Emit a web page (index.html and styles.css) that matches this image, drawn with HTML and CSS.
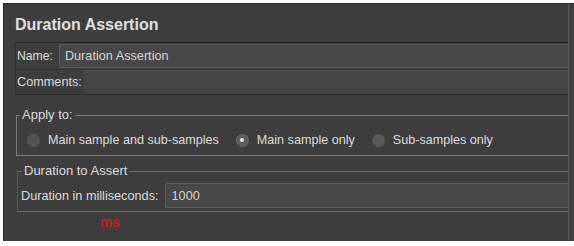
FILE: index.html
```html
<!DOCTYPE html>
<html>
<head>
<meta charset="utf-8">
<link rel="stylesheet" href="styles.css">
</head>
<body>
<div class="frame">
  <div class="panel">
    <div class="title">Duration Assertion</div>
    <div class="namebox">
      <div class="row name-row">
        <span class="lbl">Name:</span>
        <div class="field">Duration Assertion</div>
      </div>
      <div class="row comments-row">
        <span class="lbl">Comments:</span>
        <div class="field field-flat"></div>
      </div>
    </div>
    <fieldset class="group apply">
      <legend>Apply to:</legend>
      <div class="radios">
        <label class="opt"><span class="radio off dim"></span>Main sample and sub-samples</label>
        <label class="opt"><span class="radio on"></span>Main sample only</label>
        <label class="opt"><span class="radio off"></span>Sub-samples only</label>
      </div>
    </fieldset>
    <fieldset class="group duration">
      <legend>Duration to Assert</legend>
      <div class="drow">
        <span class="lbl">Duration in milliseconds:</span>
        <div class="field dfield">1000</div>
      </div>
    </fieldset>
    <div class="ms">ms</div>
  </div>
  <div class="edge"></div>
</div>
</body>
</html>
```

FILE: styles.css
```css
html, body {
  margin: 0;
  padding: 0;
  background: #ffffff;
}
body {
  font-family: "Liberation Sans", Arial, sans-serif;
  font-size: 12.7px;
  color: #d6d6d6;
}
.frame {
  margin: 3px 0 0 3px;
  height: 238px;
  display: flex;
  background: #3d3d3d;
  border-left: 1px solid #262626;
  border-top: 1px solid #2c2c2c;
  box-sizing: border-box;
  overflow: hidden;
}
.panel {
  flex: 1;
  min-width: 0;
  padding: 12px 0 0 11px;
}
.edge {
  width: 5px;
  border-left: 1px solid #5a5a5a;
  background: #3e3e3e;
}
.title {
  font-size: 16px;
  font-weight: bold;
  line-height: 18px;
  color: #e0e0e0;
}
.namebox {
  margin-top: 8px;
  border-top: 1px solid #2a2a2a;
  border-left: 1px solid #2e2e2e;
  border-bottom: 1px solid #2a2a2a;
}
.row {
  display: flex;
  align-items: stretch;
  padding-left: 1px;
}
.name-row {
  height: 26px;
}
.comments-row {
  height: 24px;
  border-top: 1px solid #333;
}
.lbl {
  display: flex;
  align-items: center;
  white-space: nowrap;
  color: #dcdcdc;
}
.name-row .lbl {
  font-size: 12.2px;
}
.field {
  flex: 1;
  margin: 1px 0 1px 6px;
  background: #474747;
  border: 1px solid #5c5c5c;
  border-right: none;
  display: flex;
  align-items: center;
  padding-left: 5px;
  color: #d6d6d6;
}
.field-flat {
  margin: 0 0 0 2px;
  border: none;
  border-top: 1px solid #505050;
  background: #454545;
}
.group {
  margin: 0;
  border: 1px solid #7c7c7c;
  border-right: none;
  min-width: 0;
}
.group legend {
  padding: 0 2px;
  line-height: 14px;
  font-size: 13px;
  color: #dcdcdc;
}
.apply {
  margin: 13px 0 0 1px;
  padding: 8px 0 5px 3px;
}
.radios {
  display: flex;
  align-items: center;
  height: 20px;
  padding-left: 7px;
  gap: 17px;
  font-size: 12.6px;
}
.opt {
  display: flex;
  align-items: center;
  gap: 8px;
  color: #dcdcdc;
  white-space: nowrap;
}
.radio {
  width: 13px;
  height: 13px;
  border-radius: 50%;
  box-sizing: border-box;
  display: flex;
  align-items: center;
  justify-content: center;
  background: #5a5a5a;
}
.radio.dim {
  background: #535353;
  border: 1px solid #5e5e5e;
}
.radio.on {
  background: #5c5c5c;
  border: 1px solid #6a6a6a;
}
.radio.on::after {
  content: "";
  width: 4px;
  height: 4px;
  border-radius: 50%;
  background: #e6e6e6;
}
.duration {
  margin: 8px 0 0 2px;
  padding: 5px 0 3px 4px;
  border-color: #6e6e6e;
  border-left-color: #5a5a5a;
}
.drow {
  display: flex;
  height: 25px;
  margin-left: -1px;
}
.dfield {
  margin: 0 0 0 6px;
  border-color: #5e5e5e;
  padding-left: 6px;
}
.ms {
  margin: 3px 0 0 85px;
  font-size: 14px;
  line-height: 14px;
  font-weight: bold;
  letter-spacing: -0.5px;
  color: #c4222f;
}
```
